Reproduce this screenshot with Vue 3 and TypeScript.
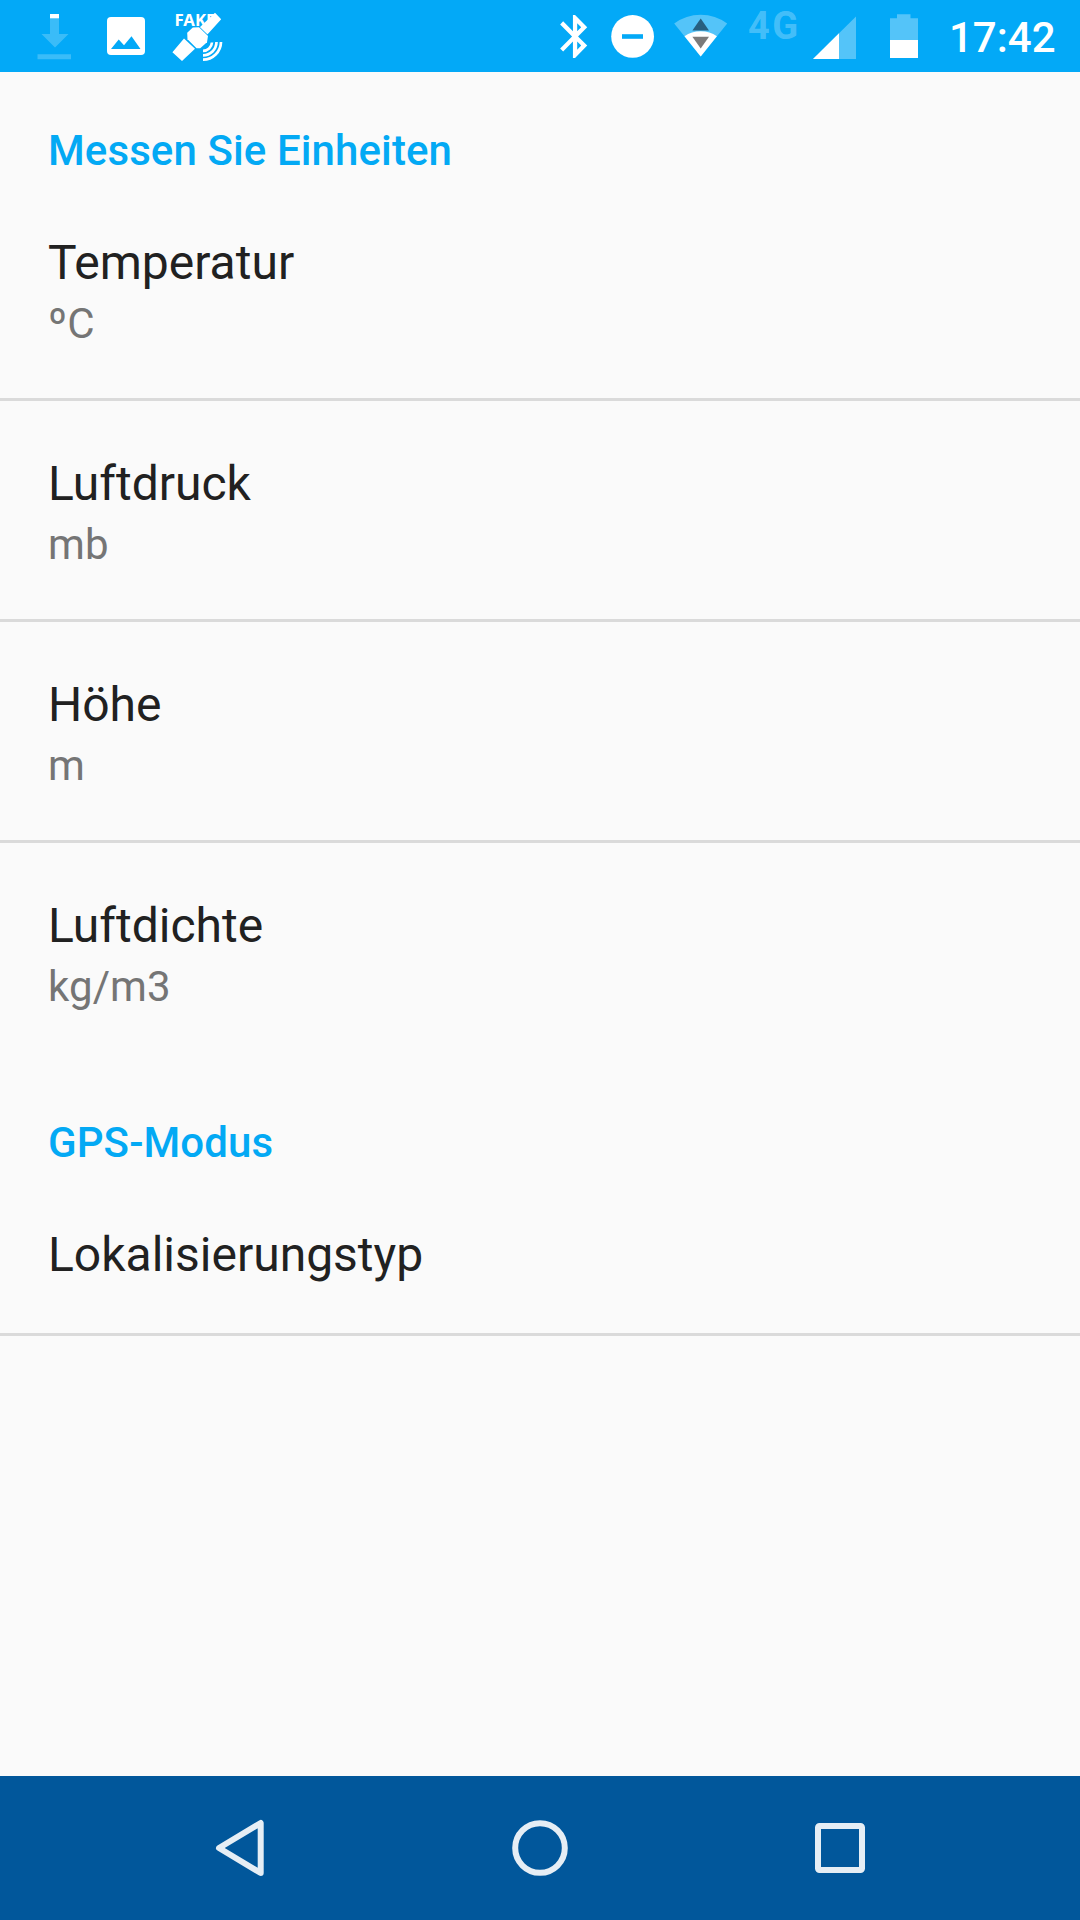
<script setup lang="ts">
interface Preference {
  title: string
  summary?: string
  divider: boolean
}

interface Category {
  name: string
  items: Preference[]
}

const categories: Category[] = [
  {
    name: 'Messen Sie Einheiten',
    items: [
      { title: 'Temperatur', summary: 'ºC', divider: true },
      { title: 'Luftdruck', summary: 'mb', divider: true },
      { title: 'Höhe', summary: 'm', divider: true },
      { title: 'Luftdichte', summary: 'kg/m3', divider: false },
    ],
  },
  {
    name: 'GPS-Modus',
    items: [{ title: 'Lokalisierungstyp', divider: true }],
  },
]
</script>

<template>
  <div class="screen">
    <header class="status">
      <div class="group">
        <!-- download -->
        <svg width="90" height="72" viewBox="0 0 90 72">
          <path d="M50 18h9v16h9.500L55 47.500 41.500 34H50z M37.500 54.300h33.500v4.900H37.500z" fill="#fff" fill-opacity=".22" />
          <path d="M50 14h9v4.300h-9z" fill="#fff" />
        </svg>
        <!-- picture -->
        <svg width="75" height="72" viewBox="90 0 75 72">
          <rect x="107" y="17" width="38" height="38" rx="4" fill="#fff" />
          <path d="M111 49l7.700-9.500 5.300 5.700 7.500-9L140.500 49z" class="cut" />
        </svg>
        <!-- fake gps satellite -->
        <svg width="70" height="72" viewBox="165 0 70 72">
          <text x="174.500" y="26.300" class="fake" textLength="41" lengthAdjust="spacingAndGlyphs">FAKE</text>
          <path d="M199 28L215 12.700l6.200 6.600L206 36z M184 38.500L195 48.800 182 61l-9.600-8.700z" fill="#fff" />
          <path d="M187.200 32.700l5.600-5.200 6.200-.3 9 8.800-1 6.200-6.800 6h-3.700l-9-9z" class="hub" />
          <path d="M212 42.500a9 9 0 0 1-9 8.300M216.500 42a13.500 13.500 0 0 1-13.500 13.300M221 42a18 18 0 0 1-18 17.700" fill="none" stroke="#fff" stroke-width="2.700" />
        </svg>
      </div>

      <div class="group">
        <!-- bluetooth -->
        <svg width="60" height="72" viewBox="540 0 60 72">
          <path transform="translate(549.500 10.600) scale(2.130 2.150)" fill="#fff" d="M17.710 7.710L12 2h-1v7.590L6.410 5 5 6.410 10.590 12 5 17.590 6.410 19 11 14.410V22h1l5.710-5.710-4.300-4.290 4.300-4.290zM13 5.830l1.880 1.880L13 9.590V5.830zm1.880 10.460L13 18.170v-3.760l1.880 1.880z" />
        </svg>
        <!-- do not disturb -->
        <svg width="65" height="72" viewBox="600 0 65 72">
          <circle cx="632.600" cy="36.400" r="21.400" fill="#fff" />
          <path d="M622 34.200h21v4.600h-21z" class="cut" />
        </svg>
        <!-- wifi with traffic arrows -->
        <svg width="75" height="72" viewBox="665 0 75 72">
          <path d="M700.700 56.500L674.200 23.500Q686 14.700 700.700 14.700T727.200 23.500z" fill="#fff" fill-opacity=".32" />
          <path d="M700.700 56.500L684.500 36.300Q691.500 31.300 700.700 31.300T716.900 36.300z" fill="#fff" />
          <path d="M700.700 18.500l8.300 12h-16.600z" fill="#275f80" />
          <path d="M692.400 36.800H709l-8.300 11.700z" fill="#7b7b7b" />
        </svg>
        <span class="network">4G</span>
        <!-- signal -->
        <svg width="65" height="72" viewBox="805 0 65 72">
          <path d="M856 16.500V59h-43z" fill="#fff" fill-opacity=".32" />
          <path d="M839 33.300V59h-26z" fill="#fff" />
        </svg>
        <!-- battery -->
        <svg width="65" height="72" viewBox="870 0 65 72">
          <path d="M890 18.200h7v-4h13.500v4h7.500V40h-28z" fill="#fff" fill-opacity=".32" />
          <path d="M890 40h28v18h-28z" fill="#fff" />
        </svg>
        <span class="clock">17:42</span>
      </div>
    </header>

    <main class="content">
      <section v-for="category in categories" :key="category.name">
        <h2 class="category">{{ category.name }}</h2>
        <div
          v-for="item in category.items"
          :key="item.title"
          class="row"
          :class="{ divided: item.divider, single: !item.summary }"
        >
          <div class="title">{{ item.title }}</div>
          <div v-if="item.summary" class="summary">{{ item.summary }}</div>
        </div>
      </section>
    </main>

    <nav class="nav">
      <svg width="300" height="144" viewBox="90 1776 300 144">
        <path d="M219 1848L260.700 1823v50z" class="key" />
      </svg>
      <svg width="300" height="144" viewBox="390 1776 300 144">
        <circle cx="540" cy="1848" r="24.800" class="key" />
      </svg>
      <svg width="300" height="144" viewBox="690 1776 300 144">
        <rect x="818" y="1826" width="44" height="44" rx="1.500" class="key" />
      </svg>
    </nav>
  </div>
</template>

<style>
body {
  margin: 0;
}
</style>

<style scoped>
.screen {
  width: 1080px;
  height: 1920px;
  display: flex;
  flex-direction: column;
  overflow: hidden;
  background: #fafafa;
  font-family: Roboto, 'Noto Sans', sans-serif;
}

svg {
  display: block;
  flex: none;
}

.status {
  height: 72px;
  flex: none;
  display: flex;
  justify-content: space-between;
  background: #03a9f7;
  color: #fff;
}

.group {
  display: flex;
}

.cut {
  fill: #03a9f7;
}

.fake {
  font: 700 15.5px 'Noto Sans', 'DejaVu Sans', sans-serif;
  fill: #fff;
}

.hub {
  fill: #fff;
  stroke: #03a9f7;
  stroke-width: 1.6px;
  paint-order: stroke;
}

.network {
  box-sizing: border-box;
  width: 65px;
  padding-left: 8px;
  font-size: 38px;
  font-weight: 700;
  letter-spacing: 2.5px;
  line-height: 53px;
  color: rgba(255, 255, 255, 0.27);
}

.clock {
  box-sizing: border-box;
  width: 145px;
  padding-left: 14px;
  font-size: 42px;
  font-weight: 500;
  line-height: 76px;
  white-space: nowrap;
}

.content {
  flex: 1;
}

.category {
  box-sizing: border-box;
  height: 108px;
  margin: 0;
  padding: 54px 48px 0;
  font-size: 42px;
  font-weight: 500;
  line-height: 50px;
  letter-spacing: 0.1px;
  color: #03a9f4;
}

.row {
  box-sizing: border-box;
  height: 221px;
  padding: 53px 48px 0;
}

.row.single {
  height: 164px;
}

.row.divided {
  border-bottom: 3px solid #dadada;
}

.title {
  font-size: 48px;
  line-height: 60px;
  color: #212121;
}

.summary {
  margin-top: 6px;
  font-size: 42px;
  line-height: 50px;
  letter-spacing: 0.1px;
  color: #757575;
}

.nav {
  height: 144px;
  flex: none;
  display: flex;
  justify-content: center;
  background: #01579b;
}

.key {
  fill: none;
  stroke: #e6eef5;
  stroke-width: 6px;
  stroke-linejoin: round;
}
</style>
